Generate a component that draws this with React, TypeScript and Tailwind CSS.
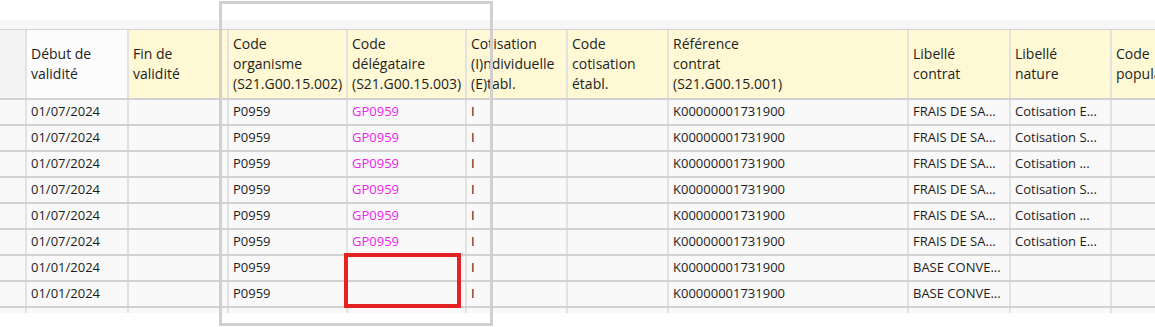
const widths = [
  "w-[27px]",
  "w-[102px]",
  "w-[100px]",
  "w-[119px]",
  "w-[119px]",
  "w-[101px]",
  "w-[101px]",
  "w-[240px]",
  "w-[102px]",
  "w-[101px]",
  "w-[150px]",
];

const headers: string[][] = [
  [],
  ["Début de", "validité"],
  ["Fin de", "validité"],
  ["Code", "organisme", "(S21.G00.15.002)"],
  ["Code", "délégataire", "(S21.G00.15.003)"],
  ["Cotisation", "(I)ndividuelle", "(E)tabl."],
  ["Code", "cotisation", "établ."],
  ["Référence", "contrat", "(S21.G00.15.001)"],
  ["Libellé", "contrat"],
  ["Libellé", "nature"],
  ["Code", "population"],
];

const headerBg = [
  "bg-[#f4f4f4]",
  "bg-[#fcfcfc]",
  "bg-[#fff8d4]",
  "bg-[#fff8d4]",
  "bg-[#fff8d4]",
  "bg-[#fff8d4]",
  "bg-[#fff8d4]",
  "bg-[#fff8d4]",
  "bg-[#fff8d4]",
  "bg-[#fff8d4]",
  "bg-[#fff8d4]",
];

type Row = { debut: string; delegataire: string; contrat: string; nature: string };

const rows: Row[] = [
  { debut: "01/07/2024", delegataire: "GP0959", contrat: "FRAIS DE SA...", nature: "Cotisation E..." },
  { debut: "01/07/2024", delegataire: "GP0959", contrat: "FRAIS DE SA...", nature: "Cotisation S..." },
  { debut: "01/07/2024", delegataire: "GP0959", contrat: "FRAIS DE SA...", nature: "Cotisation ..." },
  { debut: "01/07/2024", delegataire: "GP0959", contrat: "FRAIS DE SA...", nature: "Cotisation S..." },
  { debut: "01/07/2024", delegataire: "GP0959", contrat: "FRAIS DE SA...", nature: "Cotisation ..." },
  { debut: "01/07/2024", delegataire: "GP0959", contrat: "FRAIS DE SA...", nature: "Cotisation E..." },
  { debut: "01/01/2024", delegataire: "", contrat: "BASE CONVE...", nature: "" },
  { debut: "01/01/2024", delegataire: "", contrat: "BASE CONVE...", nature: "" },
];

function DataRow({ row }: { row: Row }) {
  const cells = [
    "",
    row.debut,
    "",
    "P0959",
    row.delegataire,
    "I",
    "",
    "",
    "K00000001731900",
    row.contrat,
    row.nature,
    "",
  ];
  // index 7 is the "Référence contrat" column: shift by one
  const values = [cells[0], cells[1], cells[2], cells[3], cells[4], cells[5], cells[6], cells[8], cells[9], cells[10], cells[11]];
  return (
    <div className="flex h-[26px] border-b-2 border-[#d2d2d2] bg-[#f9f9f9]">
      {values.map((v, i) => (
        <div
          key={i}
          className={`${widths[i]} shrink-0 flex items-center pl-[4px] border-r-2 border-[#e2e2e2] overflow-hidden whitespace-nowrap text-[13px] ${
            i === 4 ? "text-[#f01cf0]" : "text-[#1c1c1c]"
          }`}
        >
          {v}
        </div>
      ))}
    </div>
  );
}

export default function App() {
  return (
    <div className="relative w-[1155px] h-[327px] overflow-hidden bg-white font-['Open_Sans',sans-serif]">
      <div className="h-[20px] bg-white" />
      <div className="h-[9px] bg-[#f7f7f7]" />
      <div className="w-[1262px]">
        <div className="flex h-[71px] border-t border-b-2 border-[#d2d2d2]">
          {headers.map((lines, i) => (
            <div
              key={i}
              className={`${widths[i]} ${headerBg[i]} shrink-0 flex flex-col justify-center pl-[4px] border-r-2 border-[#e2e2e2] overflow-hidden whitespace-nowrap text-[14px] leading-[20px] text-[#1e1e1e]`}
            >
              {lines.map((l) => (
                <span key={l}>{l}</span>
              ))}
            </div>
          ))}
        </div>
        {rows.map((r, i) => (
          <DataRow key={i} row={r} />
        ))}
        <div className="flex h-[5px] bg-[#f9f9f9]">
          {widths.map((w, i) => (
            <div key={i} className={`${w} shrink-0 border-r-2 border-[#e2e2e2]`} />
          ))}
        </div>
      </div>

      {/* annotation: gray frame */}
      <div className="absolute left-[219px] top-[1px] w-[274px] h-[325px] border-[3px] border-[#d0d0d0]" />
      {/* annotation: red box */}
      <div className="absolute left-[344px] top-[253px] w-[117px] h-[55px] border-4 border-[#e52222]" />
    </div>
  );
}
